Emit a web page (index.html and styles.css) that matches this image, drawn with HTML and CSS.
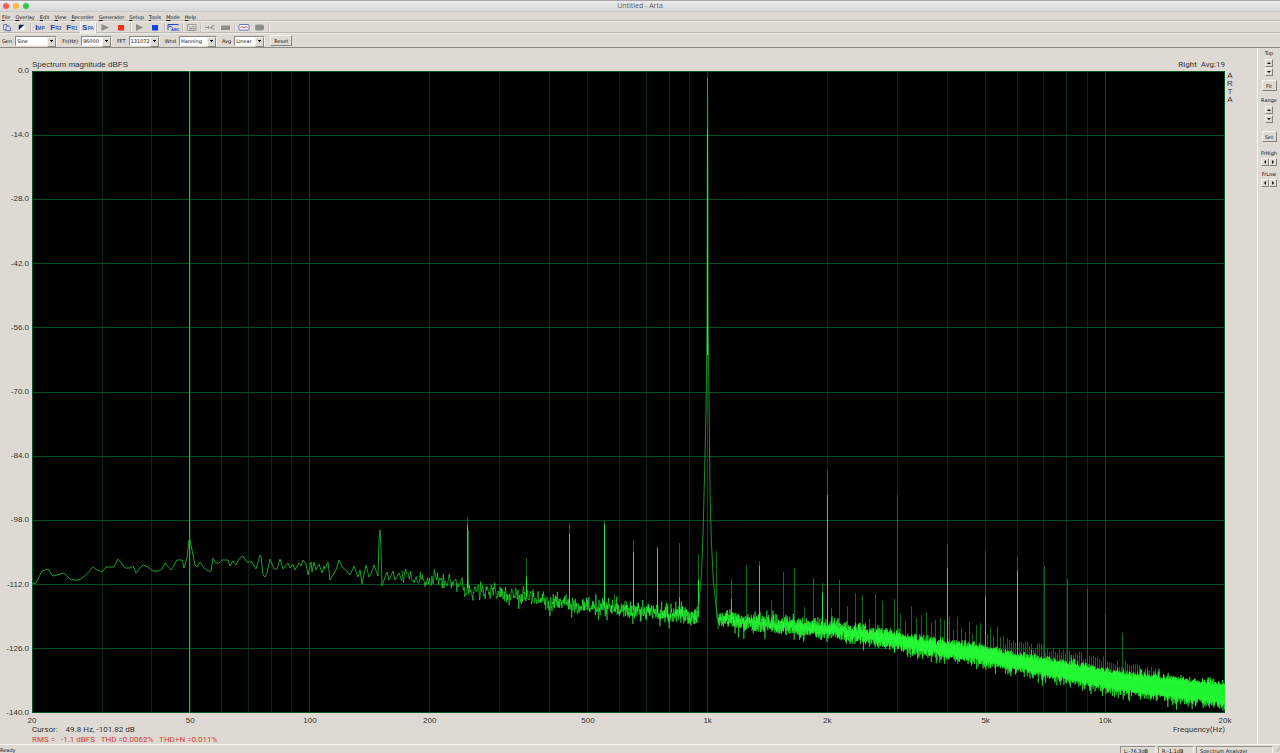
FILE: index.html
```html
<!DOCTYPE html>
<html lang="en">
<head>
<meta charset="utf-8">
<title>Untitled - Arta</title>
<link rel="stylesheet" href="styles.css">
</head>
<body>
<div class="window">
  <header class="titlebar">
    <div class="lights">
      <button class="light close" aria-label="Close"></button>
      <button class="light minimize" aria-label="Minimize"></button>
      <button class="light maximize" aria-label="Zoom"></button>
    </div>
    <h1 class="title">Untitled - Arta</h1>
  </header>

  <nav class="menubar">
    <a href="#"><u>F</u>ile</a><a href="#"><u>O</u>verlay</a><a href="#"><u>E</u>dit</a><a href="#"><u>V</u>iew</a><a href="#"><u>R</u>ecorder</a><a href="#"><u>G</u>enerator</a><a href="#"><u>S</u>etup</a><a href="#"><u>T</u>ools</a><a href="#"><u>M</u>ode</a><a href="#"><u>H</u>elp</a>
  </nav>

  <div class="toolbar">
    <button class="tool first" aria-label="Copy"><svg viewBox="0 0 16 11"><path d="M4 2.500h3.500l1 1v4.500H4z" fill="#fff" stroke="#28429c" stroke-width=".8"/><path d="M6.500 4h3l1.500 1.500v3.500H6.500z" fill="#dfe5f4" stroke="#28429c" stroke-width=".8"/></svg></button>
    <button class="tool first" aria-label="Invert colors"><svg viewBox="0 0 16 11"><path d="M4 2.500h6v6H4z" fill="#fff"/><path d="M4 2.500h6L4 8.500z" fill="#122459"/></svg></button>
    <span class="sep"></span>
    <button class="tool mode">I<small>MP</small></button>
    <button class="tool mode">F<small>R2</small></button>
    <button class="tool mode">F<small>R1</small></button>
    <button class="tool mode pressed">S<small>PA</small></button>
    <span class="sep"></span>
    <button class="tool" aria-label="Play"><svg viewBox="0 0 16 11"><path d="M3.500 2v7l7.500-3.500z" fill="#8d8d89"/></svg></button>
    <button class="tool" aria-label="Record"><svg viewBox="0 0 16 11"><path d="M4 3h6v5.500H4z" fill="#f7301c"/></svg></button>
    <span class="sep"></span>
    <button class="tool" aria-label="Start generator"><svg viewBox="0 0 16 11"><path d="M4 2v7l7-3.500z" fill="#8d8d89"/></svg></button>
    <button class="tool" aria-label="Stop generator"><svg viewBox="0 0 16 11"><path d="M4 3h6v5.500H4z" fill="#1040f0"/></svg></button>
    <span class="sep"></span>
    <button class="tool" aria-label="Overlay labels"><svg viewBox="0 0 16 11"><path d="M2 2.500H12.500M2 2.500v5.500M2.500 5q1-2 4 .500" fill="none" stroke="#234bd0"/><text x="5" y="9" class="glyph">ABC</text></svg></button>
    <span class="sep"></span>
    <button class="tool" aria-label="Calibrate"><svg viewBox="0 0 16 11"><path d="M3.500 2.500h8.500v6h-8.500zM5 4l2 3 2-3 2 3M5 7h6" fill="none" stroke="#8f8f8b" stroke-width=".8"/></svg></button>
    <span class="sep"></span>
    <button class="tool" aria-label="Connect"><svg viewBox="0 0 16 11"><path d="M3 5.500h3.500M6.500 4v3M8 5.500h2M10 3.800h2.500M10 7h2.500M10 4v3" fill="none" stroke="#8d8d89"/></svg></button>
    <button class="tool" aria-label="Disconnect"><svg viewBox="0 0 16 11"><path d="M3 3.500h9v4.500H3z" fill="#8d8d89"/></svg></button>
    <span class="sep"></span>
    <button class="tool" aria-label="Signal monitor"><svg viewBox="0 0 16 11"><rect x="3" y="2.500" width="10" height="5.500" rx="1" fill="#fff" stroke="#4056b8" stroke-width=".8"/><path d="M4.500 6l1.500-1.500 2 1.500 2-1.500 1.500 1" fill="none" stroke="#e03a3a"/></svg></button>
    <button class="tool" aria-label="Level meter"><svg viewBox="0 0 16 11"><rect x="3" y="2.500" width="9" height="6" rx="2" fill="#8d8d89"/></svg></button>
    <span class="sep"></span>
  </div>

  <div class="controls">
    <label for="gen">Gen</label><span class="combo w-gen"><select id="gen"><option>Sine</option></select></span>
    <label for="fs">Fs(Hz)</label><span class="combo w-small"><select id="fs"><option>96000</option></select></span>
    <label for="fft">FFT</label><span class="combo w-small"><select id="fft"><option>131072</option></select></span>
    <label for="wnd">Wnd</label><span class="combo w-wnd"><select id="wnd"><option>Hanning</option></select></span>
    <label for="avg">Avg</label><span class="combo w-small"><select id="avg"><option>Linear</option></select></span>
    <button class="btn reset">Reset</button>
  </div>

  <div class="body">
    <main class="graph">
      <div class="graph-head"><span>Spectrum magnitude dBFS</span><span class="pre narrow">Right  Avg:19</span></div>
      <div class="yaxis">
        <span>0.0</span><span>-14.0</span><span>-28.0</span><span>-42.0</span><span>-56.0</span><span>-70.0</span><span>-84.0</span><span>-98.0</span><span>-112.0</span><span>-126.0</span><span>-140.0</span>
      </div>
      <svg class="plot" id="plot" viewBox="0 0 1193 642" preserveAspectRatio="none" role="img" aria-label="Spectrum"></svg>
      <div class="brand"><span>A</span><span>R</span><span>T</span><span>A</span></div>
      <div class="xaxis">
        <span>20</span><span>50</span><span>100</span><span>200</span><span>500</span><span>1k</span><span>2k</span><span>5k</span><span>10k</span><span>20k</span>
      </div>
      <div class="graph-foot narrow">
        <div class="readout">
          <p class="pre">Cursor:    49.8 Hz, -101.82 dB</p>
          <p class="pre rms">RMS =   -1.1 dBFS   THD =0.0062%   THD+N =0.011%</p>
        </div>
        <span>Frequency(Hz)</span>
      </div>
    </main>

    <aside class="side">
      <section class="group top"><span>Top</span><div class="spin"><button class="btn arrow" aria-label="Top up"><i class="up"></i></button><button class="btn arrow" aria-label="Top down"><i class="down"></i></button></div></section>
      <button class="btn wide fit">Fit</button>
      <section class="group"><span>Range</span><div class="spin"><button class="btn arrow" aria-label="Range up"><i class="up"></i></button><button class="btn arrow" aria-label="Range down"><i class="down"></i></button></div></section>
      <button class="btn wide set">Set</button>
      <section class="group freq"><span>FrHigh</span><div class="spin row"><button class="btn arrow" aria-label="High left"><i class="left"></i></button><button class="btn arrow" aria-label="High right"><i class="right"></i></button></div></section>
      <section class="group freq"><span>FrLow</span><div class="spin row"><button class="btn arrow" aria-label="Low left"><i class="left"></i></button><button class="btn arrow" aria-label="Low right"><i class="right"></i></button></div></section>
    </aside>
  </div>

  <footer class="status">
    <span class="ready">Ready</span>
    <span class="pane">L:-76.3dB</span>
    <span class="pane">R:-1.1dB</span>
    <span class="pane mode-pane">Spectrum Analyzer</span>
    <svg class="grip" viewBox="0 0 8 8"><path d="M1 8L8 1M4 8l4-4" stroke="#9a978f" fill="none"/></svg>
  </footer>
</div>
<script src="plot.js"></script>
</body>
</html>
```
FILE: styles.css
```css
* { box-sizing: border-box; }

body {
  margin: 0;
  background: #dedad3;
  color: #111;
  font-family: "DejaVu Sans", Verdana, sans-serif;
  font-size: 5px;
}

button, select { font: inherit; color: inherit; }

.window {
  display: flex;
  flex-direction: column;
  height: 100vh;
  overflow: hidden;
}

.titlebar {
  flex: none;
  display: grid;
  grid-template-columns: 1fr auto 1fr;
  align-items: center;
  height: 12px;
  border-top: 1px solid #a9a5a7;
  border-bottom: 1px solid #cbc9c7;
  background: linear-gradient(#ececec, #d8d8d8);
}

.lights { display: flex; gap: 4px; padding-left: 3px; }

.light {
  width: 6px;
  height: 6px;
  padding: 0;
  border: 0;
  border-radius: 50%;
}

.close { background: #fc5b57; }
.minimize { background: #fdbb40; }
.maximize { background: #34c84a; }

.title {
  margin: 0;
  color: #5c5c5c;
  font: 7px/10px "Open Sans", sans-serif;
}

.menubar {
  flex: none;
  display: flex;
  gap: 5px;
  height: 9px;
  padding: 0 2px;
  border-bottom: 1px solid #bdb9b2;
  line-height: 10px;
}

.menubar a { color: #111; text-decoration: none; }

.toolbar {
  flex: none;
  display: flex;
  align-items: center;
  height: 12px;
  border-top: 1px solid #efede8;
  border-bottom: 1px solid #bdb9b2;
}

.tool {
  display: flex;
  align-items: center;
  justify-content: center;
  width: 16px;
  height: 11px;
  padding: 0;
  border: 0;
  background: none;
}

.tool.first { width: 15px; }
.tool svg { display: block; width: 16px; height: 11px; }
.glyph { fill: #234bd0; font: 700 4px "Liberation Sans", sans-serif; }

.tool.mode {
  align-items: baseline;
  color: #213b9b;
  font: 700 8px/11px "Liberation Sans", sans-serif;
}

.mode small { color: #4560bd; font-size: 5px; }
.pressed { border: 1px solid #f8f7f4; border-width: 0 1px; background: #ebe9e4; }

.sep {
  width: 2px;
  height: 9px;
  border-left: 1px solid #c2beb7;
  border-right: 1px solid #efede8;
}

.controls {
  flex: none;
  display: flex;
  align-items: center;
  height: 15px;
  padding-left: 2px;
  border-top: 1px solid #efede8;
  border-bottom: 1px solid #8c8882;
}

.controls label { margin-right: 3px; }

.combo {
  position: relative;
  height: 10px;
  margin-right: 5px;
  border: 1px solid #8a8781;
  border-right-color: #f4f2ee;
  border-bottom-color: #f4f2ee;
  background: #fff;
}

.combo::after {
  content: "";
  position: absolute;
  top: 0;
  right: 0;
  width: 7px;
  height: 8px;
  border: 1px solid #f4f2ee;
  border-right-color: #8a8781;
  border-bottom-color: #8a8781;
  background: linear-gradient(#111, #111) 50% 2px / 3px 1px no-repeat,
    linear-gradient(#111, #111) 50% 3px / 1px 1px no-repeat, #dedad3;
  pointer-events: none;
}

.combo select {
  display: block;
  width: 100%;
  height: 8px;
  padding: 0 0 0 1px;
  border: 0;
  appearance: none;
  background: none;
  line-height: 8px;
}

.w-gen { width: 42px; }
.w-wnd { width: 38px; }
.w-small { width: 31px; }

.btn {
  padding: 0;
  border: 1px solid #f6f4f0;
  border-right-color: #85827c;
  border-bottom-color: #85827c;
  background: #dedad3;
  color: #111;
  text-align: center;
}

.reset { width: 22px; height: 11px; }

.body { flex: 1; display: flex; min-height: 0; }

.graph {
  flex: 1;
  min-width: 0;
  display: grid;
  grid-template-columns: 32px minmax(0, 1fr) 32px;
  grid-template-rows: 23px minmax(0, 1fr) 12px 19px;
  font: 8px/10px "Liberation Sans", Arial, sans-serif;
  color: #333;
}

.pre { white-space: pre; }
.narrow { font-family: Roboto, "Liberation Sans", sans-serif; }

.graph-head {
  grid-column: 2;
  display: flex;
  justify-content: space-between;
  align-items: end;
  padding: 0 0 1px;
}

.yaxis {
  grid-column: 1;
  grid-row: 2;
  display: flex;
  flex-direction: column;
  justify-content: space-between;
  margin: -5px 3px -5px 0;
  text-align: right;
}

.plot {
  grid-column: 2;
  grid-row: 2;
  display: block;
  width: 100%;
  height: 100%;
  background: #000;
}

.plot path { fill: none; vector-effect: non-scaling-stroke; }
.grid-h { stroke: #06501f; }
.grid-v { stroke: #042b0f; }
.grid-decade { stroke: #07481f; }
.frame { stroke: #095528; }
.cursor { stroke: #76942a; }
.trace { stroke: #27f935; stroke-width: .6; }
.trace-low { stroke: #1b9f26; }
.skirt { stroke: #1fb52c; stroke-width: .8; }
.dim { stroke: #14851f; stroke-width: .8; }
.bright { stroke: #26e536; }
.comb { stroke: #0e6a1a; }

.brand {
  grid-column: 3;
  grid-row: 2;
  display: flex;
  flex-direction: column;
  width: 10px;
  text-align: center;
  line-height: 8px;
  padding-top: 1px;
}

.xaxis {
  grid-column: 2;
  grid-row: 3;
  display: grid;
  grid-template-columns: 398fr 301fr 301fr 398fr 301fr 301fr 398fr 301fr 301fr 0fr;
  padding-top: 3px;
}

.xaxis span { display: flex; justify-content: center; width: 0; }

.graph-foot {
  grid-column: 2;
  grid-row: 4;
  display: flex;
  justify-content: space-between;
}

.readout p { margin: 0; }
.readout .rms { color: #d23b35; }

.side {
  flex: none;
  display: flex;
  flex-direction: column;
  align-items: center;
  width: 23px;
  border-left: 1px solid #f6f4f0;
  color: #111;
}

.group { display: flex; flex-direction: column; align-items: center; gap: 2px; line-height: 7px; margin-top: 6px; }
.group.top { margin-top: 2px; }
.spin { display: flex; flex-direction: column; gap: 1px; }
.spin.row { flex-direction: row; gap: 0; }

.arrow { display: grid; place-items: center; width: 8px; height: 8px; }
.arrow i { width: 0; height: 0; border: 2px solid transparent; }
.arrow .up { border-top: 0; border-bottom-color: #111; }
.arrow .down { border-bottom: 0; border-top-color: #111; }
.arrow .left { border-left: 0; border-right-color: #111; }
.arrow .right { border-right: 0; border-left-color: #111; }

.wide { width: 15px; height: 11px; margin-top: 4px; }
.wide.set { margin-top: 8px; }
.group.freq { margin-top: 8px; gap: 1px; }
.group.freq + .freq { margin-top: 5px; }

.status {
  flex: none;
  display: flex;
  align-items: stretch;
  gap: 2px;
  height: 9px;
  border-top: 1px solid #f6f4f0;
  color: #111;
  line-height: 10px;
}

.ready { flex: 1; }

.pane {
  width: 36px;
  margin-top: 1px;
  padding-left: 3px;
  border-top: 1px solid #98948d;
  border-left: 1px solid #98948d;
  border-right: 1px solid #f6f4f0;
  line-height: 8px;
}

.mode-pane { width: 77px; }
.grip { width: 5px; height: 8px; }
```
FILE: plot.js
```js
const NS = 'http://www.w3.org/2000/svg';
const plot = document.getElementById('plot');
const LEFT = 32, TOP = 71, W = 1193, H = 642;

function path(d, cls) {
  const el = document.createElementNS(NS, 'path');
  el.setAttribute('d', d);
  el.setAttribute('class', cls);
  plot.appendChild(el);
}

const freqX = f => W * Math.log10(f / 20) / 3;
const px = x => (x - LEFT).toFixed(1);
const py = y => (y - TOP).toFixed(1);

// repeatable noise source
let seed = 20117;
function rnd() {
  seed = (seed * 1664525 + 1013904223) % 4294967296;
  return seed / 4294967296;
}
const gauss = () => rnd() + rnd() + rnd() + rnd() + rnd() + rnd() - 3;

// grid
for (const base of [10, 100, 1000, 10000]) {
  for (let k = 1; k < 10; k++) {
    const f = base * k;
    if (f <= 20 || f >= 20000) continue;
    const x = Math.floor(freqX(f)) + 0.5;
    path(`M${x} 0V${H}`, k === 1 ? 'grid-decade' : 'grid-v');
  }
}
for (let i = 1; i < 10; i++) {
  path(`M0 ${Math.floor(i * H / 10) + 0.5}H${W}`, 'grid-h');
}
path(`M.5 .5H${W - 0.5}V${H - 0.5}H.5Z`, 'frame');

// low end of the spectrum, [x, y]
const low = '32,584 36,583 42,571 48,569 53,576 64,573 70,579 74,580 79,580 85,576 93,567 97,570 102,572 106,567 114,567 118,559 125,568 130,568 133,566 136,573 140,568 143,565 148,567 153,571 158,571 162,569 165,563 171,570 173,567 177,560 182,560 184,568 187,558 189,540 190,540 192,550 195,565 197,567 200,562 204,568 208,571 211,571 213,558 216,563 219,563 222,560 228,560 230,566 233,561 236,565 239,559 243,556 247,562 252,562 256,569 260,555 261,556 263,575 265,577 267,573 270,559 274,569 277,569 280,559 283,569 288,563 290,568 293,564 295,570 299,563 301,566 303,560 306,564 308,575 311,562 312,572 314,562 316,570 319,564 322,573 324,566 325,569 328,562 330,580 336,570 339,560 342,567 347,571 350,575 354,566 358,577 360,570 362,584 366,565 369,577 371,574 374,565 378,576 379,540 380,530 381,550 382,586 384,580 387,572 389,580 393,571 395,580 399,573 402,581';
path('M' + low.split(' ').map(p => {
  const [x, y] = p.split(',');
  return px(x) + ' ' + py(y);
}).join('L'), 'trace-low');

// mean noise floor, [x, y]
const floor = [[402, 577], [430, 581], [458, 584], [475, 591], [500, 594], [530, 597], [560, 602],
  [590, 606], [620, 609], [650, 612], [690, 616], [730, 620], [790, 626], [840, 631],
  [890, 639], [920, 646], [987, 656], [1053, 669], [1120, 682], [1170, 688], [1225, 694]];
function floorY(x) {
  let i = 1;
  while (i < floor.length - 1 && floor[i][0] < x) i++;
  const [x0, y0] = floor[i - 1], [x1, y1] = floor[i];
  return y0 + (y1 - y0) * (x - x0) / (x1 - x0);
}

// noise, one point per FFT bin
function noise(from, to) {
  const step = 96000 / 131072;
  const f = x => 20 * 10 ** (3 * (x - LEFT) / W);
  let d = '', prev = gauss();
  for (let hz = f(from); hz < f(to); hz += step) {
    const g = gauss();
    const x = LEFT + freqX(hz);
    const v = g * 0.8 + prev * 0.4;
    const y = floorY(x) + v * 7 + (v > 1.3 ? (v - 1.3) * 4 : 0);
    d += (d ? 'L' : 'M') + (x - LEFT).toFixed(2) + ' ' + py(y);
    prev = g;
  }
  path(d, 'trace');
}

// harmonics: x, top, and where the brighter part starts
const spikes = [[467.5, 517, 525], [468.5, 530], [526.5, 558, 577], [569.5, 523, 534], [604.5, 521, 524], [633.5, 540, 552],
  [657.5, 547, 548], [679.5, 543, 597], [698.5, 554, 580], [716.5, 551], [731.5, 579, 599], [746.5, 565],
  [759.5, 561, 566], [771.5, 600], [783.5, 572], [794.5, 568], [804.5, 607], [813.5, 578], [822.5, 583, 593],
  [827.5, 470, 495], [831.5, 608], [839.5, 580], [847.5, 606], [855.5, 593], [862.5, 595], [869.5, 619],
  [875.5, 594], [882.5, 601], [894.5, 599], [897.5, 495], [900.5, 613], [905.5, 621], [911.5, 606],
  [916.5, 618], [921.5, 615], [926.5, 612], [931.5, 623], [935.5, 620], [940.5, 618], [944.5, 620],
  [947.5, 544, 568], [949.5, 617], [953.5, 630], [957.5, 617], [961.5, 628], [965.5, 632], [969.5, 622],
  [972.5, 634], [976.5, 625], [980.5, 623], [985.5, 551, 597], [987.5, 634], [990.5, 627], [993.5, 636],
  [997.5, 627], [1000.5, 637], [1017.5, 557, 571], [1044.5, 566], [1067.5, 579], [1087.5, 589], [1105.5, 613],
  [1122.5, 633], [624.5, 601], [614.5, 594]];
for (let x = 1003.5; x < 1160; x += 2) {
  const top = 636 + (x - 1003) * 0.2 + rnd() * 8;
  path(`M${px(x)} ${py(top)}V${py(floorY(x))}`, 'comb');
}
for (const [x, top, bright] of spikes) {
  path(`M${px(x)} ${py(top)}V${py(floorY(x))}`, 'dim');
  if (bright) path(`M${px(x)} ${py(bright)}V${py(floorY(x))}`, 'bright');
}

noise(402, 698);
noise(718, 1225);

// 1 kHz fundamental
const skirt = [[698, 615], [700, 590], [701.5, 575], [703, 535], [704.6, 472], [705.4, 440], [706.2, 400],
  [707, 320], [707.4, 129], [707.5, 78], [707.8, 129], [708.2, 320], [709, 400], [709.5, 440],
  [710, 492], [711.3, 540], [713.3, 580], [716, 607], [717, 612], [718, 622]];
path('M' + skirt.map(([x, y]) => px(x) + ' ' + py(y)).join('L'), 'skirt');
path(`M${px(707.5)} ${py(129)}V${py(355)}`, 'bright');

path(`M${px(189.5)} 0V${H}`, 'cursor');
```
